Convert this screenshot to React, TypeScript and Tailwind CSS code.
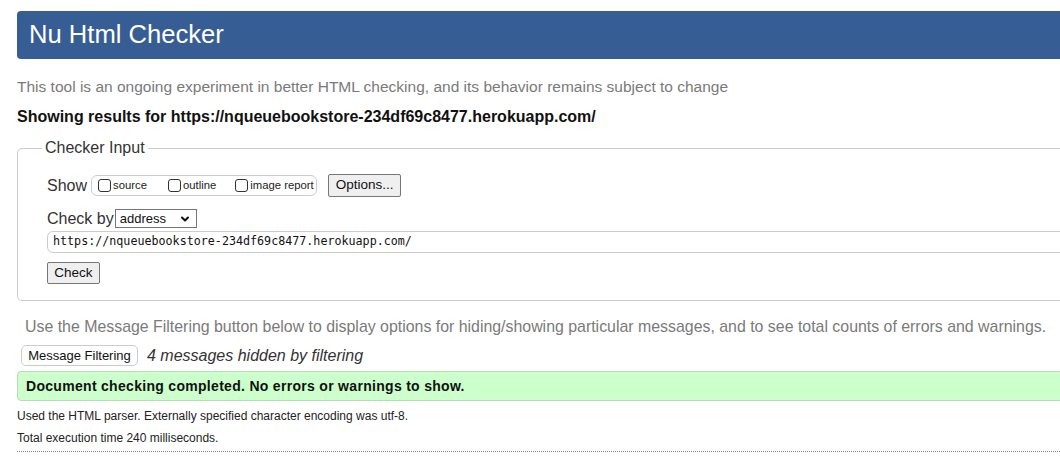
import { ChevronDown } from 'lucide-react';

const options = [
  { label: 'source', gap: 'mr-[21px]' },
  { label: 'outline', gap: 'mr-[19px]' },
  { label: 'image report', gap: '' },
];

export default function App() {
  return (
    <div className="h-[471px] w-[1060px] overflow-hidden bg-white font-['Liberation_Sans',Arial,sans-serif] text-[#222]">
      <div className="w-[1120px] pl-[17px] pt-[11px]">
        <header className="h-[48px] rounded-[4px] bg-[#375d95] pl-[12px] flex items-center">
          <h1 className="text-[25.6px] leading-none text-white">Nu Html Checker</h1>
        </header>

        <p className="mt-[18px] text-[15.5px] leading-[20px] text-[#7a7a7a]">
          This tool is an ongoing experiment in better HTML checking, and its behavior remains subject to change
        </p>
        <p className="mt-[10px] text-[16px] leading-[20px] font-bold text-[#111]">
          Showing results for https://nqueuebookstore-234df69c8477.herokuapp.com/
        </p>

        <fieldset className="mt-[12px] border border-[#cccccc] rounded-[5px] pl-[29px] pb-[16px]">
          <legend className="-ml-[5px] px-[3px] text-[16px] leading-[18px] text-[#333]">Checker Input</legend>

          <div className="mt-[17px] flex items-center h-[23px]">
            <span className="text-[16px] text-[#333] mr-[4px]">Show</span>
            <div className="h-[21px] w-[226px] border border-[#cccccc] rounded-[6px] flex items-center pl-[6px]">
              {options.map((o) => (
                <label key={o.label} className={`flex items-center whitespace-nowrap ${o.gap}`}>
                  <input
                    type="checkbox"
                    className="appearance-none w-[13px] h-[13px] border border-[#333] rounded-[3px] bg-white mr-[2px]"
                  />
                  <span className="text-[11.3px] text-[#222]">{o.label}</span>
                </label>
              ))}
            </div>
            <button className="ml-[11px] h-[23px] w-[73px] border border-[#767676] rounded-[2px] bg-[#efefef] text-[13.5px] text-[#111]">
              Options...
            </button>
          </div>

          <div className="mt-[11px] flex items-center h-[21px]">
            <span className="text-[16px] text-[#333]">Check by</span>
            <div className="ml-[1px] h-[19px] w-[82px] border border-[#767676] flex items-center justify-between pl-[4px] pr-[5px] bg-white">
              <span className="text-[13px] text-[#111]">address</span>
              <ChevronDown className="w-[12px] h-[12px] text-[#111]" strokeWidth={4} />
            </div>
          </div>

          <div className="mt-[2px] h-[22px] border border-[#cccccc] rounded-[6px] flex items-center pl-[5px]">
            <span className="font-['DejaVu_Sans_Mono',monospace] text-[11.7px] text-[#111]">
              https://nqueuebookstore-234df69c8477.herokuapp.com/
            </span>
          </div>

          <button className="mt-[9px] h-[22px] w-[53px] border border-[#767676] rounded-[2px] bg-[#efefef] text-[13.5px] text-[#111]">
            Check
          </button>
        </fieldset>

        <p className="mt-[16px] pl-[8px] text-[15.9px] leading-[20px] text-[#7a7a7a]">
          Use the Message Filtering button below to display options for hiding/showing particular messages, and to see total counts of errors and warnings.
        </p>

        <div className="mt-[8px] flex items-center h-[21px]">
          <button className="ml-[4px] h-[21px] w-[117px] border border-[#cccccc] rounded-[5px] bg-white text-[13px] text-[#111]">
            Message Filtering
          </button>
          <span className="ml-[9px] italic text-[16px] text-[#333]">4 messages hidden by filtering</span>
        </div>

        <div className="mt-[5px] h-[30px] border border-[#b8dcb8] rounded-[4px] bg-[#ccffcc] flex items-center pl-[8px]">
          <span className="text-[14px] font-bold tracking-[0.3px] text-[#111]">
            Document checking completed. No errors or warnings to show.
          </span>
        </div>

        <p className="mt-[4px] text-[12px] leading-[22px] text-[#222]">
          Used the HTML parser. Externally specified character encoding was utf-8.
        </p>
        <p className="text-[12px] leading-[22px] text-[#222]">Total execution time 240 milliseconds.</p>

        <div className="mt-[2px] border-t border-dotted border-[#888]" />
      </div>
    </div>
  );
}
